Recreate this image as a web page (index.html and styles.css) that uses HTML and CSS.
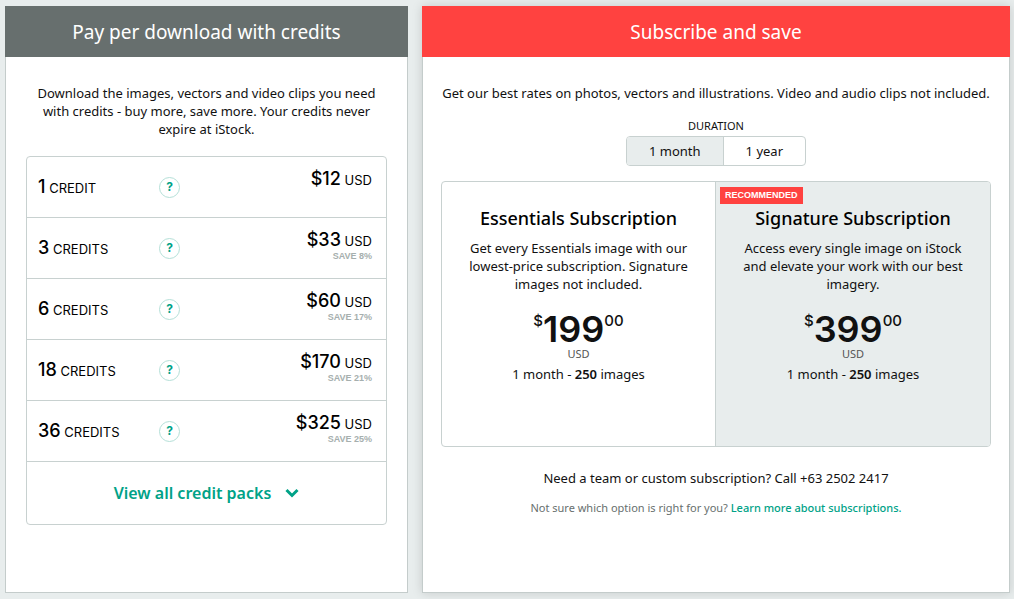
FILE: index.html
```html
<!DOCTYPE html>
<html lang="en">
<head>
    <meta charset="UTF-8">
    <meta name="viewport" content="width=device-width, initial-scale=1.0">
    <title>Plans and pricing</title>
    <link rel="stylesheet" href="styles.css">
</head>
<body>
    <main class="pricing">
        <!-- Credits -->
        <section class="panel">
            <h2 class="panel-title">Pay per download with credits</h2>
            <div class="panel-body">
                <p class="intro">Download the images, vectors and video clips you need with credits - buy more, save more. Your credits never expire at iStock.</p>
                <div class="packs">
                    <table class="packs-table">
                        <tr>
                            <td class="amount"><strong>1</strong> CREDIT</td>
                            <td class="info"><button type="button" class="help" aria-label="About 1 credit">?</button></td>
                            <td class="cost"><strong>$12</strong> USD</td>
                        </tr>
                        <tr>
                            <td class="amount"><strong>3</strong> CREDITS</td>
                            <td class="info"><button type="button" class="help" aria-label="About 3 credits">?</button></td>
                            <td class="cost"><strong>$33</strong> USD<span class="saving">SAVE 8%</span></td>
                        </tr>
                        <tr>
                            <td class="amount"><strong>6</strong> CREDITS</td>
                            <td class="info"><button type="button" class="help" aria-label="About 6 credits">?</button></td>
                            <td class="cost"><strong>$60</strong> USD<span class="saving">SAVE 17%</span></td>
                        </tr>
                        <tr>
                            <td class="amount"><strong>18</strong> CREDITS</td>
                            <td class="info"><button type="button" class="help" aria-label="About 18 credits">?</button></td>
                            <td class="cost"><strong>$170</strong> USD<span class="saving">SAVE 21%</span></td>
                        </tr>
                        <tr>
                            <td class="amount"><strong>36</strong> CREDITS</td>
                            <td class="info"><button type="button" class="help" aria-label="About 36 credits">?</button></td>
                            <td class="cost"><strong>$325</strong> USD<span class="saving">SAVE 25%</span></td>
                        </tr>
                    </table>
                    <button type="button" class="view-all">
                        View all credit packs
                        <svg width="14" height="10" viewBox="0 0 14 10" aria-hidden="true">
                            <path d="M1.5 2 L7 7.5 L12.5 2" fill="none" stroke="currentColor" stroke-width="3"/>
                        </svg>
                    </button>
                </div>
            </div>
        </section>

        <!-- Subscriptions -->
        <section class="panel panel-subscribe">
            <h2 class="panel-title">Subscribe and save</h2>
            <div class="panel-body">
                <p class="intro">Get our best rates on photos, vectors and illustrations. Video and audio clips not included.</p>
                <fieldset class="duration">
                    <legend>DURATION</legend>
                    <div class="duration-options">
                        <input type="radio" name="duration" id="month" checked>
                        <label for="month">1 month</label>
                        <input type="radio" name="duration" id="year">
                        <label for="year">1 year</label>
                    </div>
                </fieldset>
                <div class="plans">
                    <article class="plan">
                        <h3>Essentials Subscription</h3>
                        <p>Get every Essentials image with our lowest-price subscription. Signature images not included.</p>
                        <div class="price"><span>$</span><strong>199</strong><span>00</span></div>
                        <div class="currency">USD</div>
                        <div class="quota">1 month - <b>250</b> images</div>
                    </article>
                    <article class="plan plan-recommended">
                        <span class="badge">RECOMMENDED</span>
                        <h3>Signature Subscription</h3>
                        <p>Access every single image on iStock and elevate your work with our best imagery.</p>
                        <div class="price"><span>$</span><strong>399</strong><span>00</span></div>
                        <div class="currency">USD</div>
                        <div class="quota">1 month - <b>250</b> images</div>
                    </article>
                </div>
                <p class="team">Need a team or custom subscription? Call +63 2502 2417</p>
                <p class="note">Not sure which option is right for you? <a href="#">Learn more about subscriptions.</a></p>
            </div>
        </section>
    </main>
</body>
</html>
```
FILE: styles.css
```css
* {
    box-sizing: border-box;
}

body {
    margin: 0;
    background-color: #e8eded;
    color: #111;
    font-family: 'Noto Sans', 'Liberation Sans', sans-serif;
    font-size: 13px;
    line-height: 18px;
    text-align: center;
}

h2, h3, p {
    margin: 0;
    font-weight: 400;
}

button {
    font-family: inherit;
    cursor: pointer;
}

.pricing {
    display: grid;
    grid-template-columns: 403fr 588fr;
    gap: 14px;
    min-height: 100vh;
    padding: 6px 4px 6px 5px;
}

.panel {
    display: flex;
    flex-direction: column;
    background-color: #fff;
}

.panel-subscribe {
    box-shadow: 0 0 10px rgba(0, 0, 0, 0.15);
}

.panel-title {
    padding: 14px 20px 13px;
    background-color: #676f6e;
    color: #fff;
    font-size: 19px;
    line-height: 24px;
}

.panel-subscribe .panel-title {
    background-color: #ff4240;
}

.panel-body {
    flex: 1;
    padding: 27px 20px 20px;
    border: 1px solid #c4cccb;
    border-top: none;
}

.panel-subscribe .panel-body {
    padding: 27px 18px 20px;
}

/* Credit packs */
.packs {
    margin-top: 18px;
    border: 1px solid #c8d1d0;
    border-radius: 4px;
}

.packs-table {
    width: 100%;
    border-spacing: 0;
    table-layout: fixed;
}

.packs-table td {
    height: 61px;
    padding: 0;
    border-bottom: 1px solid #c8d1d0;
    color: #000;
    font-family: Inter, 'Liberation Sans', sans-serif;
}

.packs-table strong {
    font-size: 18px;
    font-weight: 500;
}

.packs-table .amount {
    width: 132px;
    padding-left: 11px;
    text-align: left;
}

.packs-table .info {
    width: 22px;
}

.packs-table .cost {
    padding: 11px 14px 0 0;
    text-align: right;
    vertical-align: top;
    line-height: 22px;
}

.help {
    display: block;
    width: 21px;
    height: 21px;
    padding: 0;
    border: 1px solid #b5e0d8;
    border-radius: 50%;
    background-color: #fff;
    color: #00a287;
    font-size: 12px;
    font-weight: 700;
    line-height: 18px;
}

.saving {
    display: block;
    color: #a6afae;
    font-family: 'Liberation Sans', sans-serif;
    font-size: 9px;
    font-weight: 700;
    line-height: 8px;
}

.view-all {
    display: flex;
    justify-content: center;
    align-items: center;
    gap: 14px;
    width: 100%;
    height: 62px;
    border: none;
    background: none;
    color: #00a287;
    font-size: 16px;
    font-weight: 600;
}

/* Duration switch */
.duration {
    margin: 15px 0 0;
    padding: 0;
    border: none;
}

.duration legend {
    margin: 0 auto;
    padding: 0;
    font-size: 11px;
}

.duration-options {
    display: inline-flex;
    margin-top: 1px;
    border: 1px solid #c8d1d0;
    border-radius: 4px;
    overflow: hidden;
}

.duration-options input {
    position: absolute;
    opacity: 0;
}

.duration-options label {
    padding: 5px 22px;
    cursor: pointer;
}

.duration-options label + input + label {
    border-left: 1px solid #c8d1d0;
}

.duration-options input:checked + label {
    background-color: #e8eded;
}

/* Plans */
.plans {
    display: grid;
    grid-template-columns: 1fr 1fr;
    margin-top: 15px;
    border: 1px solid #c8d1d0;
    border-radius: 4px;
}

.plan {
    position: relative;
    min-height: 264px;
    padding: 24px 24px 62px;
    border-right: 1px solid #c8d1d0;
}

.plan-recommended {
    border-right: none;
    border-radius: 0 3px 3px 0;
    background-color: #e8eded;
}

.badge {
    position: absolute;
    top: 5px;
    left: 4px;
    padding: 0 5px;
    background-color: #ff4240;
    color: #fff;
    font-family: 'Liberation Sans', sans-serif;
    font-size: 9px;
    font-weight: 700;
    line-height: 17px;
}

.plan h3 {
    margin-bottom: 9px;
    color: #000;
    font-size: 18px;
    font-weight: 500;
    line-height: 24px;
}

.price {
    display: flex;
    justify-content: center;
    margin-top: 18px;
    font-family: Inter, 'Liberation Sans', sans-serif;
    line-height: 20px;
}

.price span {
    font-size: 15px;
    font-weight: 500;
}

.price strong {
    font-size: 36px;
    font-weight: 600;
    line-height: 36px;
}

.currency {
    color: #555;
    font-size: 11px;
    line-height: 14px;
}

.quota {
    margin-top: 4px;
}

.quota b {
    font-weight: 600;
}

.team {
    margin-top: 22px;
}

.note {
    margin-top: 12px;
    color: #676f6e;
    font-size: 11px;
}

.note a {
    color: #00a287;
    font-weight: 500;
    text-decoration: none;
}
```
